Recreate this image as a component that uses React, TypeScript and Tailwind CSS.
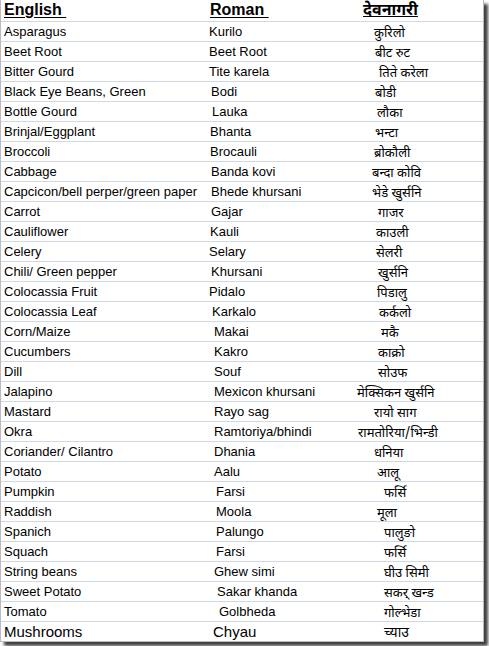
const rows: [string, string, string, string, string][] = [
  ["Asparagus", "Kurilo", "pl-[3px]", "कुरिलो", "pl-[43px]"],
  ["Beet Root", "Beet Root", "pl-[3px]", "बीट रुट", "pl-[44px]"],
  ["Bitter Gourd", "Tite karela", "pl-[3px]", "तिते करेला", "pl-[48px]"],
  ["Black Eye Beans, Green", "Bodi", "pl-[5px]", "बोडी", "pl-[44px]"],
  ["Bottle Gourd", "Lauka", "pl-[6px]", "लौका", "pl-[46px]"],
  ["Brinjal/Eggplant", "Bhanta", "pl-[4px]", "भन्टा", "pl-[44px]"],
  ["Broccoli", "Brocauli", "pl-[4px]", "ब्रोकौली", "pl-[43px]"],
  ["Cabbage", "Banda kovi", "pl-[5px]", "बन्दा कोवि", "pl-[41px]"],
  ["Capcicon/bell perper/green paper", "Bhede khursani", "pl-[5px]", "भेडे खुर्सनि", "pl-[41px]"],
  ["Carrot", "Gajar", "pl-[5px]", "गाजर", "pl-[47px]"],
  ["Cauliflower", "Kauli", "pl-[4px]", "काउली", "pl-[45px]"],
  ["Celery", "Selary", "pl-[3px]", "सेलरी", "pl-[45px]"],
  ["Chili/ Green pepper", "Khursani", "pl-[5px]", "खुर्सनि", "pl-[47px]"],
  ["Colocassia Fruit", "Pidalo", "pl-[3px]", "पिडालु", "pl-[46px]"],
  ["Colocassia Leaf", "Karkalo", "pl-[6px]", "कर्कलो", "pl-[48px]"],
  ["Corn/Maize", "Makai", "pl-[8px]", "मकै", "pl-[50px]"],
  ["Cucumbers", "Kakro", "pl-[8px]", "काक्रो", "pl-[47px]"],
  ["Dill", "Souf", "pl-[8px]", "सोउफ", "pl-[47px]"],
  ["Jalapino", "Mexicon khursani", "pl-[8px]", "मेक्सिकन खुर्सनि", "pl-[26px]"],
  ["Mastard", "Rayo sag", "pl-[8px]", "रायो साग", "pl-[43px]"],
  ["Okra", "Ramtoriya/bhindi", "pl-[8px]", "रामतोरिया/भिन्डी", "pl-[27px]"],
  ["Coriander/ Cilantro", "Dhania", "pl-[8px]", "धनिया", "pl-[43px]"],
  ["Potato", "Aalu", "pl-[8px]", "आलू", "pl-[46px]"],
  ["Pumpkin", "Farsi", "pl-[10px]", "फर्सि", "pl-[53px]"],
  ["Raddish", "Moola", "pl-[10px]", "मूला", "pl-[46px]"],
  ["Spanich", "Palungo", "pl-[10px]", "पालुङो", "pl-[53px]"],
  ["Squach", "Farsi", "pl-[10px]", "फर्सि", "pl-[53px]"],
  ["String beans", "Ghew simi", "pl-[8px]", "घीउ सिमी", "pl-[53px]"],
  ["Sweet Potato", "Sakar khanda", "pl-[11px]", "सकर् खन्ड", "pl-[53px]"],
  ["Tomato", "Golbheda", "pl-[13px]", "गोल्भेडा", "pl-[53px]"],
];

const dev = "font-['Noto_Sans_Devanagari','Noto_Sans','DejaVu_Sans',sans-serif]";

export default function App() {
  return (
    <div className="w-[489px] h-[646px] bg-white font-['Liberation_Sans',Arial,sans-serif] text-black">
      <div className="w-[484px] h-[642px] border-l border-r border-b border-[#b8bcc2] shadow-[4px_4px_3px_rgba(0,0,0,0.75)] bg-white flex flex-col">
        <div className="flex shrink-0 h-[22px] border-b border-[#d0d7e5] text-[16px] font-bold leading-[20px]">
          <div className="w-[205px] pl-[3px]">
            <span className="underline underline-offset-2">English&nbsp;</span>
          </div>
          <div className="w-[125px] pl-[4px]">
            <span className="underline underline-offset-2">Roman&nbsp;</span>
          </div>
          <div className={"flex-1 pl-[32px] pt-[4px] leading-[16px] " + dev}>
            <span className="underline underline-offset-1">देवनागरी</span>
          </div>
        </div>
        {rows.map(([en, ro, rp, dv, dp], i) => (
          <div key={i} className="flex shrink-0 h-[20px] border-b border-[#d0d7e5] text-[13px] leading-[19px]">
            <div className="w-[205px] pl-[3px] whitespace-nowrap">{en}</div>
            <div className={"w-[125px] whitespace-nowrap " + rp}>{ro}</div>
            <div className={"flex-1 whitespace-nowrap pt-[4px] leading-[15px] " + dev + " " + dp}>{dv}</div>
          </div>
        ))}
        <div className="flex shrink-0 h-[19px] text-[15px] leading-[20px]">
          <div className="w-[205px] pl-[3px]">Mushrooms</div>
          <div className="w-[125px] pl-[7px]">Chyau</div>
          <div className={"flex-1 text-[14px] pt-[4px] leading-[15px] pl-[53px] " + dev}>च्याउ</div>
        </div>
      </div>
    </div>
  );
}
